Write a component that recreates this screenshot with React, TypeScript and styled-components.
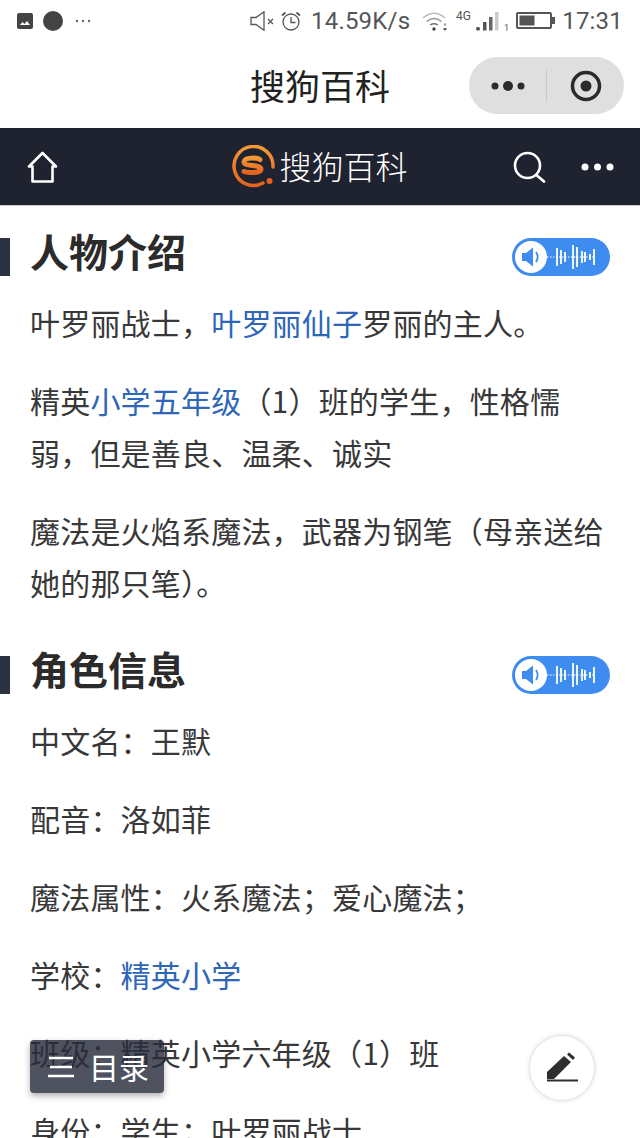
import React from 'react'
import styled, { createGlobalStyle } from 'styled-components'

const CJK = '"Noto Sans CJK SC", "Noto Sans", sans-serif'

const GlobalStyle = createGlobalStyle`
  html, body {
    margin: 0;
    padding: 0;
    background: #fff;
    font-family: ${CJK};
  }
`

const Page = styled.div`
  position: relative;
  width: 640px;
  height: 1138px;
  overflow: hidden;
  background: #fff;
`

const StatusBar = styled.div`
  height: 42px;
  display: flex;
  align-items: center;
  padding: 0 17px;
  color: #555;
`

const StatusLeft = styled.div`
  display: flex;
  align-items: center;
  gap: 10px;
  flex: 1;
`

const StatusRight = styled.div`
  display: flex;
  align-items: center;
`

const StatusItem = styled.div<{ $gap?: number }>`
  display: flex;
  align-items: center;
  margin-left: ${({ $gap }) => $gap ?? 0}px;
`

const StatusText = styled.span<{ $gap?: number }>`
  font-family: Roboto, "Liberation Sans", sans-serif;
  font-size: 24px;
  line-height: 42px;
  letter-spacing: 0.2px;
  color: #555;
  margin-left: ${({ $gap }) => $gap ?? 0}px;
`

const TitleBar = styled.div`
  position: relative;
  height: 86px;
  display: flex;
  align-items: center;
  justify-content: center;
`

const TitleText = styled.div`
  font-size: 35px;
  line-height: 86px;
  color: #222;
  font-weight: 400;
`

const Capsule = styled.div`
  position: absolute;
  top: 15px;
  right: 16px;
  width: 155px;
  height: 57px;
  border-radius: 29px;
  background: #dfdfdf;
  display: flex;
  align-items: center;
`

const CapsuleCell = styled.div`
  flex: 1;
  display: flex;
  align-items: center;
  justify-content: center;
`

const CapsuleDivider = styled.div`
  width: 1px;
  height: 32px;
  background: #c8c8c8;
`

const NavBar = styled.div`
  height: 77px;
  background: #1f2330;
  border-bottom: 1px solid #c9cacd;
  display: flex;
  align-items: center;
  padding: 0 26px 0 27px;
`

const NavCenter = styled.div`
  flex: 1;
  display: flex;
  align-items: center;
  justify-content: center;
  gap: 2px;
  padding-left: 69px;
`

const NavBrand = styled.span`
  font-size: 32px;
  line-height: 40px;
  margin-top: -3px;
  color: #fff;
  font-weight: 300;
`

const NavRight = styled.div`
  display: flex;
  align-items: center;
  gap: 35px;
`

const Content = styled.div`
  padding-top: 32px;
`

const Section = styled.section`
  margin-bottom: 48px;
`

const Heading = styled.div`
  position: relative;
  display: flex;
  align-items: flex-start;
  justify-content: space-between;
  height: 38px;
  padding: 0 30px;
  margin-bottom: 20px;

  &::before {
    content: '';
    position: absolute;
    left: 0;
    top: 0;
    width: 10px;
    height: 38px;
    background: #2c3340;
  }
`

const HeadingText = styled.h2`
  margin: -7px 0 0;
  font-size: 39px;
  line-height: 38px;
  font-weight: 700;
  color: #2b2b2b;
`

const VoicePill = styled.div`
  width: 98px;
  height: 38px;
  border-radius: 19px;
  background: #3f8cf0;
  display: flex;
  align-items: center;
  padding-left: 3px;
  box-sizing: border-box;
`

const Paragraph = styled.p`
  margin: 0 30px 26px;
  font-size: 30px;
  line-height: 52px;
  letter-spacing: 0.2px;
  color: #383838;
  font-weight: 400;
`

const Anchor = styled.span`
  color: #2e66b8;
`

const TocButton = styled.div`
  position: absolute;
  left: 30px;
  top: 1040px;
  width: 134px;
  height: 53px;
  padding-left: 18px;
  border-radius: 4px;
  background: rgba(40, 44, 60, 0.82);
  box-shadow: 0 3px 6px rgba(0, 0, 0, 0.3);
  display: flex;
  align-items: center;
  gap: 15px;
  font-size: 30px;
  line-height: 50px;
  color: #fff;
  box-sizing: border-box;
`

const TocLabel = styled.span`
  display: block;
  margin-top: -2px;
`

const EditButton = styled.div`
  position: absolute;
  left: 530px;
  top: 1036px;
  width: 64px;
  height: 64px;
  border-radius: 50%;
  background: #fff;
  box-shadow: 0 0 5px rgba(0, 0, 0, 0.22);
  display: flex;
  align-items: center;
  justify-content: center;
`

const PictureIcon = () => (
  <svg width="16" height="16" viewBox="0 0 16 16">
    <rect width="16" height="16" rx="2" fill="#444" />
    <path d="M3 12l2.500-3 2 2 2.500-3 3 4z" fill="#fff" />
  </svg>
)

const MuteIcon = () => (
  <svg width="24" height="20" viewBox="0 0 24 20" fill="none" stroke="#555" strokeWidth="1.300">
    <path d="M1 6.500h5L14 .8v18.400l-8-5.700H1z" />
    <path d="M18 8l5 5M23 8l-5 5" strokeWidth="1.200" />
  </svg>
)

const AlarmIcon = () => (
  <svg width="20" height="20" viewBox="0 0 20 20" fill="none" stroke="#555" strokeWidth="1.300">
    <circle cx="10" cy="11" r="8" />
    <path d="M10 6v5.500h4.500" />
    <path d="M1 4.500l3.500-3M19 4.500l-3.500-3" strokeWidth="1.800" />
  </svg>
)

const WifiIcon = () => (
  <svg width="26" height="19" viewBox="0 0 26 19" fill="none" stroke="#777" strokeWidth="1.500">
    <path d="M1 6c7-6 15-6 22 0" stroke="#bbb" />
    <path d="M4.500 9.500c5-4 10-4 15 0" stroke="#999" />
    <path d="M8 13c3-2 5-2 8 0" />
    <circle cx="12" cy="17" r="1.700" fill="#444" stroke="none" />
    <path d="M23 11.500v2M23 16v2M21.500 16.500l1.500 1.500 1.500-1.500" strokeWidth="1.200" stroke="#555" />
  </svg>
)

const SignalIcon = () => (
  <svg width="52" height="22" viewBox="0 0 52 22">
    <text x="0" y="10" fontSize="12" fontFamily="Roboto, sans-serif" fill="#555">4G</text>
    <rect x="20" y="17" width="4" height="3.500" rx="1.500" fill="#555" />
    <rect x="27" y="12" width="3.500" height="8.500" fill="#555" />
    <rect x="33" y="7" width="3.500" height="13.500" fill="#666" />
    <rect x="39" y="2" width="3.500" height="18.500" fill="#ccc" />
    <text x="48" y="20.500" fontSize="9" fontFamily="Roboto, sans-serif" fill="#555">1</text>
  </svg>
)

const BatteryIcon = () => (
  <svg width="39" height="18" viewBox="0 0 39 18">
    <rect x="1" y="1" width="34" height="15" rx="1" fill="none" stroke="#555" strokeWidth="2" />
    <rect x="3.500" y="3.500" width="15" height="10" fill="#555" />
    <rect x="36" y="5" width="3" height="7" fill="#555" />
  </svg>
)

const HomeIcon = () => (
  <svg width="31" height="32" viewBox="0 0 31 32" fill="none" stroke="#fff" strokeWidth="2.600" strokeLinejoin="round">
    <path d="M15.500 2L2 15.500h3.500V30.500h20V15.500H29z" />
  </svg>
)

const SearchIcon = () => (
  <svg width="33" height="32" viewBox="0 0 33 32" fill="none" stroke="#fff" strokeWidth="2.600" strokeLinecap="round">
    <circle cx="14.500" cy="14.500" r="12.500" />
    <path d="M24 24.500L31 30.500" />
  </svg>
)

const MoreDots = () => (
  <svg width="33" height="10" viewBox="0 0 33 10" fill="#fff">
    <circle cx="4" cy="5" r="3.500" />
    <circle cx="16.500" cy="5" r="3.500" />
    <circle cx="29" cy="5" r="3.500" />
  </svg>
)

const SogouLogo = () => (
  <svg width="45" height="44" viewBox="0 0 45 44">
    <defs>
      <linearGradient id="sogou" x1="0" y1="0" x2="0" y2="1">
        <stop offset="0" stopColor="#f39a35" />
        <stop offset="1" stopColor="#e6631f" />
      </linearGradient>
    </defs>
    <path d="M31 38A19.500 19.500 0 1 1 41 22" fill="none" stroke="url(#sogou)" strokeWidth="3.500" strokeLinecap="round" />
    <circle cx="37.500" cy="36" r="3" fill="#e6631f" />
    <path
      d="M28 14.500c-3-2-15.500-2.500-16 2.500 0 5 17 2 17 7.500-.5 4-13 3.500-17 2"
      fill="none"
      stroke="url(#sogou)"
      strokeWidth="5"
      strokeLinecap="round"
    />
  </svg>
)

const VoiceIcon = () => (
  <svg width="92" height="32" viewBox="0 0 92 32">
    <circle cx="16" cy="16" r="16" fill="#fff" />
    <path d="M7 12h4l7-5.500v19l-7-5.500H7z" fill="#3f8cf0" />
    <path d="M21 11c2 3 2 7 0 10" fill="none" stroke="#3f8cf0" strokeWidth="1.800" />
    <path d="M32 16h47" stroke="#fff" strokeWidth="1" strokeDasharray="1.500 1.500" />
    <g stroke="#fff" strokeWidth="1.800">
      <path d="M42 7v18M46 9v14M50 11v10M58 4v24M62 6v20M67 10v12M70 11v10M75 13v6M79 8v16" />
    </g>
  </svg>
)

const PenIcon = () => (
  <svg width="32" height="32" viewBox="0 0 32 32" fill="#2e2e2e">
    <path d="M1 27v-7L18 4l7 6L8 27z" />
    <path d="M21 2.500l2-2 6 5-2 2.500z" />
    <rect x="1" y="27.500" width="31" height="2" />
  </svg>
)

const MenuIcon = () => (
  <svg width="26" height="22" viewBox="0 0 26 22" stroke="#fff" strokeWidth="2.400">
    <path d="M1 2h24M2 11h22M0 20h26" />
  </svg>
)

const info = ['中文名：王默', '配音：洛如菲', '魔法属性：火系魔法；爱心魔法；']

const App = () => (
  <Page>
    <GlobalStyle />
    <StatusBar>
      <StatusLeft>
        <PictureIcon />
        <svg width="20" height="20" viewBox="0 0 20 20"><circle cx="10" cy="10" r="10" fill="#444" /></svg>
        <StatusItem $gap={2}>
          <svg width="16" height="4" viewBox="0 0 16 4" fill="#666">
            <circle cx="2" cy="2" r="1.200" /><circle cx="8" cy="2" r="1.200" /><circle cx="14" cy="2" r="1.200" />
          </svg>
        </StatusItem>
      </StatusLeft>
      <StatusRight>
        <MuteIcon />
        <StatusItem $gap={7}><AlarmIcon /></StatusItem>
        <StatusText $gap={10}>14.59K/s</StatusText>
        <StatusItem $gap={12}><WifiIcon /></StatusItem>
        <StatusItem $gap={8}><SignalIcon /></StatusItem>
        <StatusItem $gap={8}><BatteryIcon /></StatusItem>
        <StatusText $gap={7}>17:31</StatusText>
      </StatusRight>
    </StatusBar>
    <TitleBar>
      <TitleText>搜狗百科</TitleText>
      <Capsule>
        <CapsuleCell>
          <svg width="34" height="12" viewBox="0 0 34 12" fill="#2b2b2b">
            <circle cx="4" cy="6" r="3.500" /><circle cx="17" cy="6" r="5" /><circle cx="30" cy="6" r="3.500" />
          </svg>
        </CapsuleCell>
        <CapsuleDivider />
        <CapsuleCell>
          <svg width="32" height="32" viewBox="0 0 32 32">
            <circle cx="16" cy="16" r="13.500" fill="none" stroke="#2b2b2b" strokeWidth="3.500" />
            <circle cx="16" cy="16" r="5.500" fill="#2b2b2b" />
          </svg>
        </CapsuleCell>
      </Capsule>
    </TitleBar>
    <NavBar>
      <HomeIcon />
      <NavCenter>
        <SogouLogo />
        <NavBrand>搜狗百科</NavBrand>
      </NavCenter>
      <NavRight>
        <SearchIcon />
        <MoreDots />
      </NavRight>
    </NavBar>
    <Content>
      <Section>
        <Heading>
          <HeadingText>人物介绍</HeadingText>
          <VoicePill><VoiceIcon /></VoicePill>
        </Heading>
        <Paragraph>叶罗丽战士，<Anchor>叶罗丽仙子</Anchor>罗丽的主人。</Paragraph>
        <Paragraph>精英<Anchor>小学五年级</Anchor>（1）班的学生，性格懦弱，但是善良、温柔、诚实</Paragraph>
        <Paragraph>魔法是火焰系魔法，武器为钢笔（母亲送给她的那只笔）。</Paragraph>
      </Section>
      <Section>
        <Heading>
          <HeadingText>角色信息</HeadingText>
          <VoicePill><VoiceIcon /></VoicePill>
        </Heading>
        {info.map((text) => <Paragraph key={text}>{text}</Paragraph>)}
        <Paragraph>学校：<Anchor>精英小学</Anchor></Paragraph>
        <Paragraph>班级：精英小学六年级（1）班</Paragraph>
        <Paragraph>身份：学生；叶罗丽战士</Paragraph>
      </Section>
    </Content>
    <TocButton>
      <MenuIcon />
      <TocLabel>目录</TocLabel>
    </TocButton>
    <EditButton><PenIcon /></EditButton>
  </Page>
)

export default App
